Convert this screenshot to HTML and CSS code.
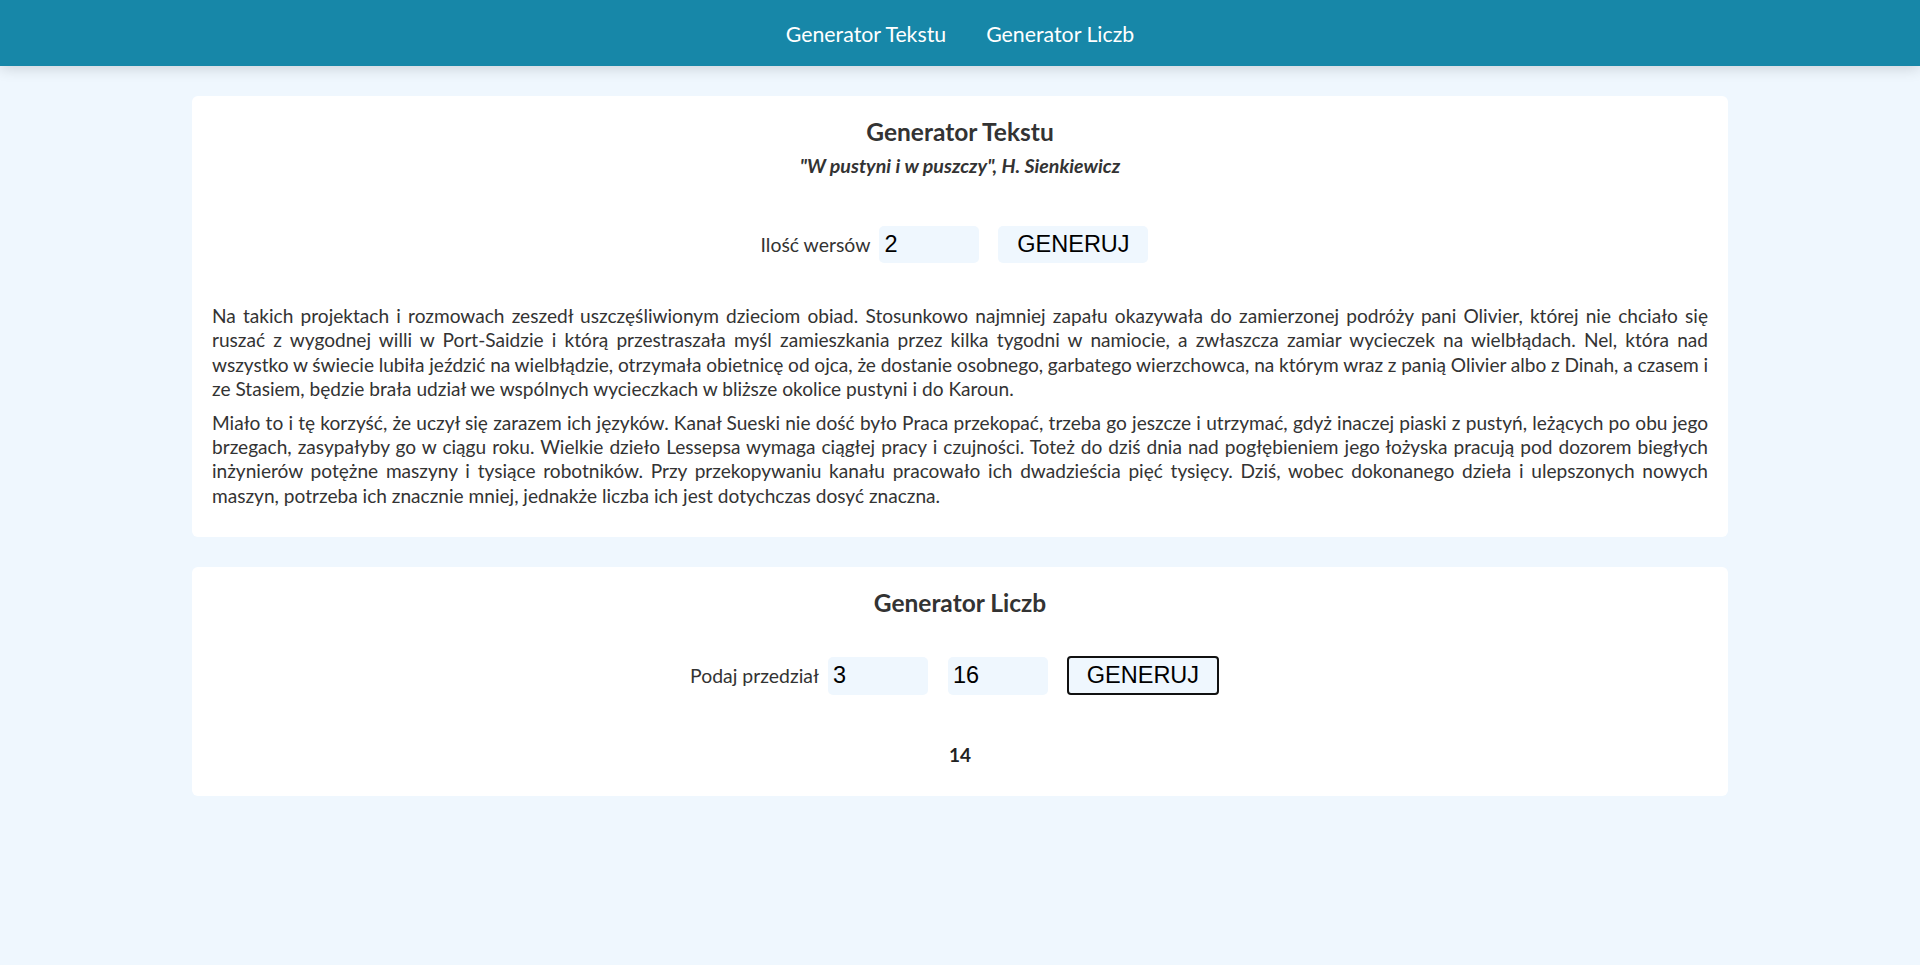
FILE: index.html
```html
<!DOCTYPE html>
<html lang="pl">
<head>
<meta charset="utf-8">
<title>Generator</title>
<link rel="stylesheet" href="styles.css">
</head>
<body>
<header class="topbar">
  <nav class="nav">
    <a class="nav-link" href="#tekst">Generator Tekstu</a>
    <a class="nav-link" href="#liczby">Generator Liczb</a>
  </nav>
</header>
<main class="content">
  <section class="card" id="tekst">
    <h2 class="card-title">Generator Tekstu</h2>
    <p class="card-subtitle">"W pustyni i w puszczy", H. Sienkiewicz</p>
    <div class="form-row form-row-text">
      <label class="form-label" for="wersy">Ilość wersów</label>
      <input class="form-input" id="wersy" type="text" value="2">
      <button class="btn" type="button">GENERUJ</button>
    </div>
    <div class="output-text">
      <p class="para">Na takich projektach i rozmowach zeszedł uszczęśliwionym dzieciom obiad. Stosunkowo najmniej zapału okazywała do zamierzonej podróży pani Olivier, której nie chciało się ruszać z wygodnej willi w Port-Saidzie i którą przestraszała myśl zamieszkania przez kilka tygodni w namiocie, a zwłaszcza zamiar wycieczek na wielbłądach. Nel, która nad <span class="tight">wszystko w świecie lubiła jeździć na wielbłądzie, otrzymała obietnicę od ojca, że dostanie osobnego, garbatego wierzchowca, na którym wraz z panią Olivier albo z Dinah, a czasem i</span> ze Stasiem, będzie brała udział we wspólnych wycieczkach w bliższe okolice pustyni i do Karoun.</p>
      <p class="para">Miało to i tę korzyść, że uczył się zarazem ich języków. Kanał Sueski nie dość było Praca przekopać, trzeba go jeszcze i utrzymać, gdyż inaczej piaski z pustyń, leżących po obu jego brzegach, zasypałyby go w ciągu roku. Wielkie dzieło Lessepsa wymaga ciągłej pracy i czujności. Toteż do dziś dnia nad pogłębieniem jego łożyska pracują pod dozorem biegłych inżynierów potężne maszyny i tysiące robotników. Przy przekopywaniu kanału pracowało ich dwadzieścia pięć tysięcy. Dziś, wobec dokonanego dzieła i ulepszonych nowych maszyn, potrzeba ich znacznie mniej, jednakże liczba ich jest dotychczas dosyć znaczna.</p>
    </div>
  </section>
  <section class="card" id="liczby">
    <h2 class="card-title">Generator Liczb</h2>
    <div class="form-row form-row-num">
      <label class="form-label" for="od">Podaj przedział</label>
      <input class="form-input" id="od" type="text" value="3">
      <input class="form-input" id="do" type="text" value="16">
      <button class="btn btn-focus" type="button">GENERUJ</button>
    </div>
    <p class="result">14</p>
  </section>
</main>
</body>
</html>
```
FILE: styles.css
```css
* { box-sizing: border-box; }
html, body { margin: 0; padding: 0; }
body {
  background: #eff7fe;
  font-family: Lato, "Open Sans", "Liberation Sans", sans-serif;
  color: #333333;
  min-height: 965px;
}
.topbar {
  height: 66px;
  background: #1787a8;
  box-shadow: 0 2px 14px rgba(0, 0, 0, 0.16);
  display: flex;
  align-items: center;
  justify-content: center;
  position: relative;
}
.nav {
  display: flex;
  gap: 40px;
  padding-top: 2px;
}
.nav-link {
  color: #ffffff;
  text-decoration: none;
  font-size: 21.3px;
  line-height: 24px;
}
.content {
  width: 80%;
  margin: 30px auto 0;
  display: flex;
  flex-direction: column;
  gap: 30px;
}
.card {
  background: #ffffff;
  border-radius: 6px;
  padding: 22px 20px 29px;
  text-align: center;
}
.card-title {
  margin: 0;
  font-size: 24.5px;
  line-height: 28px;
  font-weight: 700;
  color: #333333;
}
.card-subtitle {
  margin: 8px 0 0;
  font-size: 19.6px;
  line-height: 24px;
  font-weight: 700;
  font-style: italic;
}
.form-row {
  display: flex;
  justify-content: center;
  align-items: center;
}
.form-row-text { margin-top: 48px; }
.form-row-num { margin-top: 39px; }
.form-label {
  font-size: 19.4px;
  margin-right: 9px;
}
.form-input {
  width: 100px;
  height: 37px;
  border: none;
  border-radius: 5px;
  background: #eff7fe;
  font-family: "Liberation Sans", Arial, sans-serif;
  font-size: 23.5px;
  padding: 0 5px;
  color: #000000;
  margin-right: 20px;
  outline: none;
}
.form-row-num .form-input { height: 38px; }
.btn {
  width: 150px;
  height: 37px;
  border: none;
  border-radius: 5px;
  background: #eff7fe;
  font-family: "Liberation Sans", Arial, sans-serif;
  font-size: 23.5px;
  color: #000000;
  padding: 0;
  margin-left: -1px;
  margin-right: 11px;
}
.btn-focus {
  width: 152px;
  height: 39px;
  border: 2px solid #111111;
  border-radius: 4px;
}
.output-text {
  margin-top: 41px;
  text-align: justify;
}
.para {
  margin: 0 0 9px;
  font-size: 19.1px;
  line-height: 24.4px;
}
.para:last-child { margin-bottom: 0; }
.tight { word-spacing: -0.4px; }
.result {
  margin: 48px 0 0;
  font-size: 19px;
  line-height: 24px;
  font-weight: 700;
  color: #222222;
}
```
